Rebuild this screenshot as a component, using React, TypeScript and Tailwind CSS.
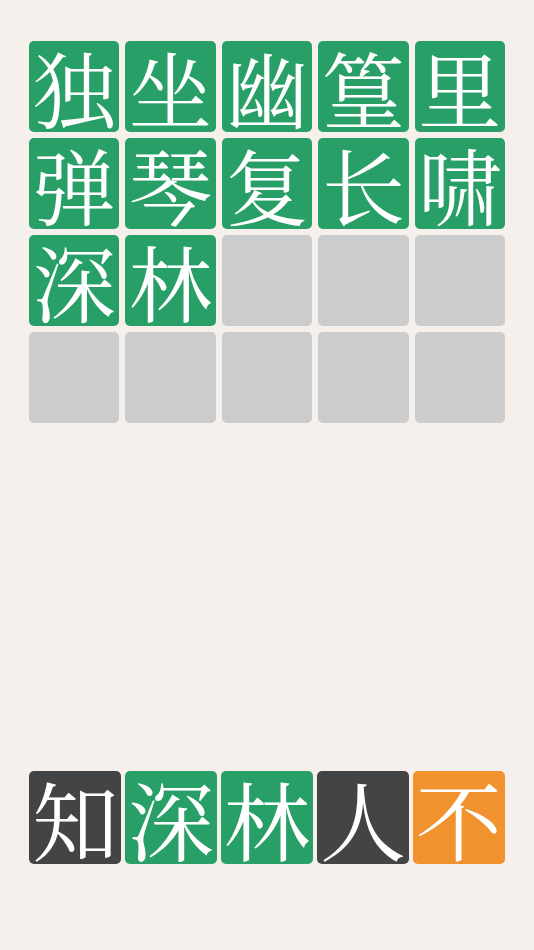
import React from "react";

const grid: (string | null)[] = [
  "独", "坐", "幽", "篁", "里",
  "弹", "琴", "复", "长", "啸",
  "深", "林", null, null, null,
  null, null, null, null, null,
];

const bottom: { ch: string; bg: string }[] = [
  { ch: "知", bg: "bg-[#444444]" },
  { ch: "深", bg: "bg-[#289f66]" },
  { ch: "林", bg: "bg-[#289f66]" },
  { ch: "人", bg: "bg-[#444444]" },
  { ch: "不", bg: "bg-[#f0932f]" },
];

const font = { fontFamily: '"Noto Serif CJK SC", "Noto Sans CJK SC", serif' };

export default function App() {
  return (
    <div className="w-[534px] h-[950px] bg-[#f5f0ec] flex flex-col px-[29px] pt-[41px] pb-[86px]" style={font}>
      <div className="grid grid-cols-5 gap-[6px]">
        {grid.map((c, i) => (
          <div
            key={i}
            className={`h-[91px] rounded-[5px] flex items-center justify-center text-white text-[83px] leading-none ${c ? "bg-[#289f66]" : "bg-[#cccccc]"}`}
          >
            {c}
          </div>
        ))}
      </div>
      <div className="mt-auto grid grid-cols-5 gap-[3.5px]">
        {bottom.map((b, i) => (
          <div
            key={i}
            className={`h-[93px] rounded-[5px] flex items-center justify-center text-white text-[86px] leading-none ${b.bg}`}
          >
            {b.ch}
          </div>
        ))}
      </div>
    </div>
  );
}
